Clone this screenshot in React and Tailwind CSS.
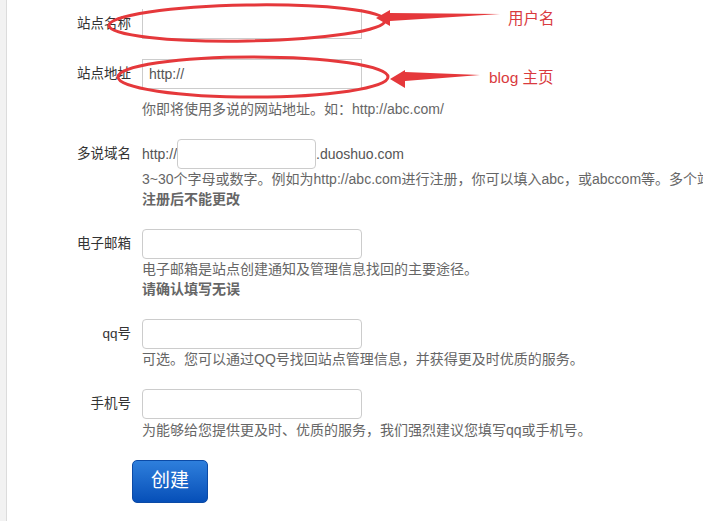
import React from "react";

const font = { fontFamily: '"Liberation Sans", "Noto Sans CJK SC", Arial, sans-serif' };

// one form row: right-aligned label, field on the right
const Row = ({ label, children, className = "" }) => (
  <div className={`flex ${className}`}>
    <div className="w-[124px] h-[30px] flex items-center justify-end text-[#333] text-[13.5px] shrink-0">{label}</div>
    <div className="ml-[11px] flex flex-col">{children}</div>
  </div>
);

const Help = ({ children, className = "" }) => (
  <p className={`h-[20px] leading-[20px] text-[#666] whitespace-nowrap ${className}`}>{children}</p>
);

const Input = ({ className = "w-[220px]", ...rest }) => (
  <input
    className={`h-[30px] border border-[#ccc] bg-white px-[6px] text-[#555] outline-none ${className}`}
    {...rest}
  />
);

const App = () => {
  return (
    <div className="relative w-[703px] h-[521px] overflow-hidden bg-white flex text-[14px]" style={font}>
      {/* page edge on the left */}
      <div className="w-[7px] shrink-0 bg-[#f2f2f2] border-r border-[#dcdcdc]" />

      <div className="flex flex-col pt-[9px]">
        <Row label="站点名称" className="mb-[20px]">
          <Input className="w-[220px] border-t-0" />
        </Row>

        <Row label="站点地址" className="mb-[20px]">
          <Input defaultValue="http://" />
          <Help className="mt-[10px]">你即将使用多说的网站地址。如：http://abc.com/</Help>
        </Row>

        <Row label="多说域名" className="mb-[20px]">
          <div className="flex items-center h-[30px] text-[#555]">
            <span>http://</span>
            <Input className="w-[139px] rounded-[4px]" />
            <span>.duoshuo.com</span>
          </div>
          <Help>3~30个字母或数字。例如为http://abc.com进行注册，你可以填入abc，或abccom等。多个站点</Help>
          <Help className="font-bold text-[#333]">注册后不能更改</Help>
        </Row>

        <Row label="电子邮箱" className="mb-[20px]">
          <Input className="w-[220px] rounded-[4px]" />
          <Help>电子邮箱是站点创建通知及管理信息找回的主要途径。</Help>
          <Help className="font-bold text-[#333]">请确认填写无误</Help>
        </Row>

        <Row label="qq号" className="mb-[20px]">
          <Input className="w-[220px] rounded-[4px]" />
          <Help>可选。您可以通过QQ号找回站点管理信息，并获得更及时优质的服务。</Help>
        </Row>

        <Row label="手机号" className="mb-[20px]">
          <Input className="w-[220px] rounded-[4px]" />
          <Help className="mt-[1px]">为能够给您提供更及时、优质的服务，我们强烈建议您填写qq或手机号。</Help>
        </Row>

        <div className="pl-[125px]">
          <button className="w-[76px] h-[43px] rounded-[5px] bg-gradient-to-b from-[#2e7fdc] to-[#064fb8] text-white text-[19px] border border-[#0b4aa6]">
            创建
          </button>
        </div>
      </div>

      {/* red annotations drawn over the form */}
      <svg className="absolute inset-0 pointer-events-none" width="703" height="521" viewBox="0 0 703 521">
        <ellipse cx="247" cy="23" rx="138" ry="18" fill="none" stroke="#e5383b" strokeWidth="3" transform="rotate(-1 247 23)" />
        <ellipse cx="253" cy="77" rx="135" ry="20" fill="none" stroke="#e5383b" strokeWidth="3" />
        <path d="M500 14 L390 13 L390 10 L376 18 L390 26 L390 21 Z" fill="#e5383b" />
        <path d="M480 75 L405 72 L405 70 L390 79 L405 88 L405 81 Z" fill="#e5383b" />
      </svg>
      <span className="absolute left-[508px] top-[7px] text-[15.5px] text-[#d93a3e]">用户名</span>
      <span className="absolute left-[489px] top-[66px] text-[15.5px] text-[#d93a3e]">blog 主页</span>
    </div>
  );
};

export default App;
